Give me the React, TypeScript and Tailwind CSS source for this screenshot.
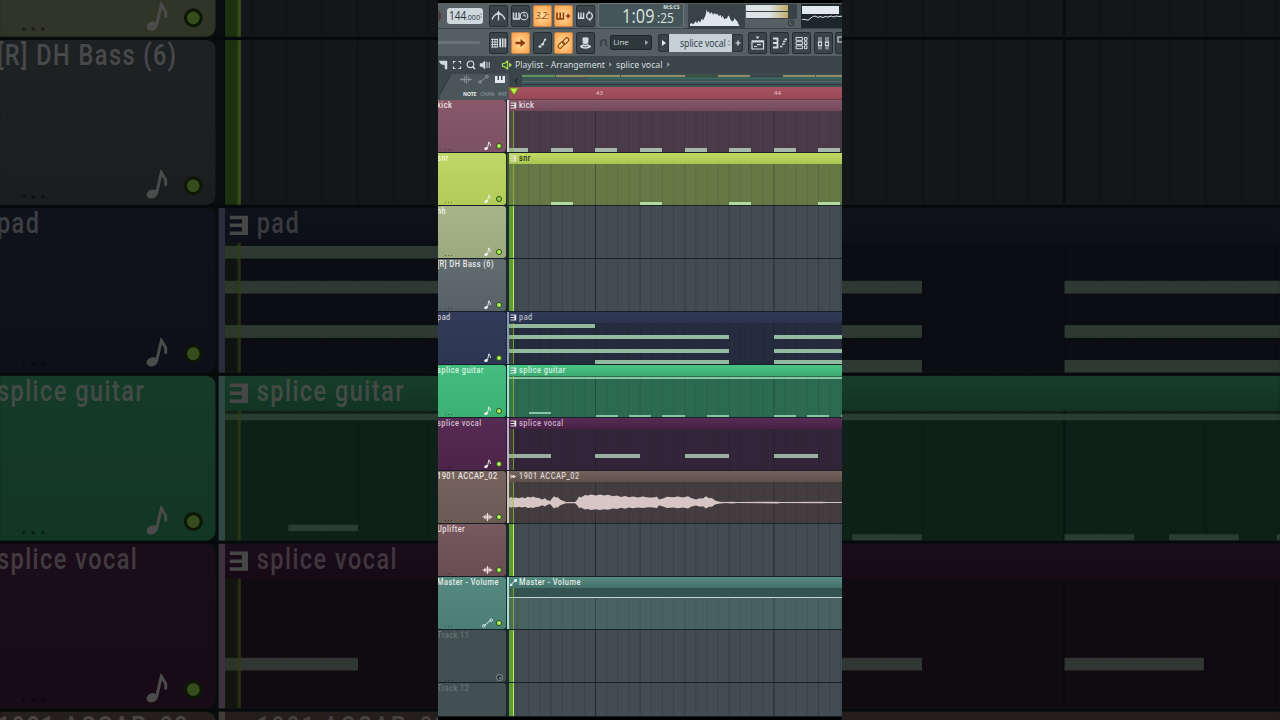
import React from 'react';

type Note = [x: number, y: number, w: number, h: number];

interface Track {
    name: string;
    head: string;
    label: string;
    icon?: 'note' | 'wave' | 'auto';
    stripe?: string;
    clipHead?: string;
    clipBody?: string;
    clipLabel?: string;
    noteColor?: string;
    notes?: Note[];
    kind?: 'pattern' | 'audio' | 'auto';
    height?: string;
}

const tracks: Track[] = [
    {
        name: 'kick', head: 'bg-linear-to-b from-[#88596b] to-[#7b5163]', label: 'text-[#f2e9ed]', icon: 'note',
        stripe: 'bg-[#e6d7de]', clipHead: 'bg-linear-to-b from-[#855a6c] to-[#73485b]', clipBody: 'bg-[#4b3a47]', clipLabel: 'text-[#eadfe4]',
        noteColor: 'bg-[#a5b8a9]', kind: 'pattern',
        notes: [[0, 48, 19, 4], [42, 48, 22, 4], [86, 48, 22, 4], [131, 48, 22, 4], [176, 48, 22, 4], [220, 48, 22, 4], [265, 48, 22, 4], [309, 48, 22, 4]],
    },
    {
        name: 'snr', head: 'bg-linear-to-b from-[#bfd768] to-[#b0cc58]', label: 'text-[#f3f9dc]', icon: 'note',
        stripe: 'bg-[#39502a]', clipHead: 'bg-linear-to-b from-[#c1da66] to-[#a9c64f]', clipBody: 'bg-[#667845]', clipLabel: 'text-[#273018]',
        noteColor: 'bg-[#b0dba0]', kind: 'pattern',
        notes: [[42, 49, 22, 3], [131, 49, 22, 3], [220, 49, 22, 3], [309, 49, 22, 3]],
    },
    { name: 'hh', head: 'bg-linear-to-b from-[#a7b389] to-[#9ca97e]', label: 'text-[#f4f6ee]', icon: 'note' },
    { name: '[R] DH Bass (6)', head: 'bg-linear-to-b from-[#626c70] to-[#566266]', label: 'text-[#e8ebed]', icon: 'note' },
    {
        name: 'pad', head: 'bg-linear-to-b from-[#323b59] to-[#2c3551]', label: 'text-[#c4c9d6]', icon: 'note',
        stripe: 'bg-[#8996c0]', clipHead: 'bg-linear-to-b from-[#323c5a] to-[#2a334e]', clipBody: 'bg-[#242c3d]', clipLabel: 'text-[#b6bccb]',
        noteColor: 'bg-[#93b9a1]', kind: 'pattern',
        notes: [[0, 11.5, 86, 4], [0, 22.5, 220, 4], [264.5, 22.5, 69, 4], [0, 37, 220, 4], [264.5, 37, 69, 4], [86, 48, 134, 4], [264.5, 48, 69, 4]],
    },
    {
        name: 'splice guitar', head: 'bg-linear-to-b from-[#45bd80] to-[#3cb073]', label: 'text-[#d7f3e3]', icon: 'note',
        stripe: 'bg-[#9de6d5]', clipHead: 'bg-linear-to-b from-[#4cc487] to-[#3caa71]', clipBody: 'bg-[#2d6b50]', clipLabel: 'text-[#d7f3e3]',
        noteColor: 'bg-[#86c6a0]', kind: 'pattern',
        notes: [[0, 12, 333, 1.5], [19.5, 47, 22.5, 2], [86.5, 50, 22, 2], [120, 50, 22, 2], [153, 50, 22.5, 2], [198, 50, 22, 2], [264.5, 50, 22.5, 2], [298, 50, 22, 2], [331.5, 50, 3, 2]],
    },
    {
        name: 'splice vocal', head: 'bg-linear-to-b from-[#562b54] to-[#4c2449]', label: 'text-[#d3bfd2]', icon: 'note',
        stripe: 'bg-[#c9a3cf]', clipHead: 'bg-linear-to-b from-[#562b54] to-[#482145]', clipBody: 'bg-[#332539]', clipLabel: 'text-[#ccaecc]',
        noteColor: 'bg-[#9ab0a0]', kind: 'pattern',
        notes: [[0, 36, 41.5, 3.5], [86, 36, 45, 3.5], [175.5, 36, 44.5, 3.5], [264.5, 36, 44.5, 3.5]],
    },
    {
        name: '1901 ACCAP_02', head: 'bg-linear-to-b from-[#77645f] to-[#6b5954]', label: 'text-[#e9e2df]', icon: 'wave',
        stripe: 'bg-[#d5c3bb]', clipHead: 'bg-linear-to-b from-[#75635d] to-[#5f504b]', clipBody: 'bg-[#433d40]', clipLabel: 'text-[#dbd2cf]', kind: 'audio',
    },
    { name: 'Uplifter', head: 'bg-linear-to-b from-[#77595f] to-[#694d53]', label: 'text-[#e8dcdf]', icon: 'wave' },
    {
        name: 'Master - Volume', head: 'bg-linear-to-b from-[#568a80] to-[#4b7f74]', label: 'text-[#e2efec]', icon: 'auto',
        stripe: 'bg-[#a4ded1]', clipHead: 'bg-linear-to-b from-[#568a80] to-[#457268]', clipBody: 'bg-[#47625f]', clipLabel: 'text-[#e2efec]', kind: 'auto',
    },
    { name: 'Track 11', head: 'bg-[#435053]', label: 'text-[#677376]' },
    { name: 'Track 12', head: 'bg-[#435053]', label: 'text-[#677376]', height: 'h-[34px]' },
];

// top half of the vocal sample: [x, amplitude]
const wave = [
    [0, 4.5], [2, 5.5], [4, 4.5], [7, 5.2], [10, 4.4], [13, 5.4], [16, 4.4], [19, 5.8], [22, 5.2], [24, 6], [27, 4.8], [30, 4.5], [33, 3], [36, 4.3], [38, 2.5], [41, 1.6], [43, 4], [45, 6.4],
    [47, 5], [49, 5.4], [51, 3], [54, 1.8], [57, 0.7], [66, 0.7], [68, 2.5], [70, 6], [72, 5.2], [76, 7.5], [79, 7], [82, 8], [87, 7.2], [91, 8], [95, 7.2], [99, 7.8],
    [104, 6.4], [108, 7], [112, 5.6], [116, 6.6], [120, 5.4], [124, 6.2], [129, 5.2], [134, 6], [139, 5], [144, 5.2], [148, 5.8], [150, 3], [154, 4.2], [158, 5.8], [164, 5.4],
    [169, 6.2], [174, 5.2], [179, 6.4], [182, 4.6], [187, 3.2], [191, 4.4], [194, 4], [197, 6.4], [200, 4.4], [203, 4.6], [206, 2], [211, 0.9], [217, 0.5], [223, 0.9], [228, 0.5], [268, 0.9], [272, 0.5], [313, 0.8], [317, 0.5], [333, 0.5],
];
const wavePoints = [...wave.map(([x, a]) => `${x},${20.6 - a}`), ...[...wave].reverse().map(([x, a]) => `${x},${20.6 + a * 0.92}`)].join(' ');

const Grid: React.FC<{ faint?: boolean }> = ({ faint }) => (
    <svg className={`absolute inset-0 h-full w-full ${faint ? 'opacity-55' : ''}`} preserveAspectRatio="none" viewBox="0 0 333 52">
        {Array.from({ length: 30 }, (_, i) => {
            const n = i + 1;
            const x = -3.2 + n * 11.15;
            const bar = n === 8 || n === 24;
            const beat = n % 4 === 0;
            return <rect key={n} x={x} y="0" width="1" height="52" fill="#10181e" opacity={bar ? 0.65 : beat ? 0.28 : 0.15} />;
        })}
    </svg>
);

const Label: React.FC<{ className: string; children: React.ReactNode }> = ({ className, children }) => (
    <span className={`inline-block origin-left scale-x-[.78] whitespace-nowrap font-['Roboto'] text-[9.5px] leading-[10px] font-medium tracking-[0.6px] ${className}`}>{children}</span>
);

const TrackIcon: React.FC<{ icon: Track['icon'] }> = ({ icon }) => {
    if (icon === 'note') {
        return (
            <svg className="h-[10px] w-[11px]" viewBox="0 0 11 10">
                <ellipse cx="4" cy="7.6" rx="1.8" ry="1.4" fill="#f2f2f2" transform="rotate(-20 4 7.6)" />
                <path d="M5.4 7.4 6.900.8 8.300 3.200 8.300 5" fill="none" stroke="#f2f2f2" strokeWidth=".9" />
            </svg>
        );
    }
    if (icon === 'wave') {
        return (
            <svg className="h-[10px] w-[11px]" viewBox="0 0 11 10">
                <path d="M.5 5h10M2.5 3.5v3M4 2.5v5M5.5 1v8M7 2.5v5M8.5 3.7v2.6" stroke="#f2dfe0" strokeWidth="1" />
            </svg>
        );
    }
    return (
        <svg className="h-[10px] w-[11px]" viewBox="0 0 11 10">
            <path d="M2.5 7.6 4.5 6 6.5 3.8 8.5 2.4" stroke="#e8f3f0" fill="none" />
            <circle cx="1.8" cy="7.8" r="1.3" fill="none" stroke="#e8f3f0" strokeWidth=".9" />
            <circle cx="9.2" cy="2.2" r="1.3" fill="none" stroke="#e8f3f0" strokeWidth=".9" />
        </svg>
    );
};

const Led: React.FC<{ track: Track }> = ({ track }) => {
    if (!track.icon) {
        return <span className="flex size-[7px] items-center justify-center rounded-full border border-[#8a9698] bg-[#2a3337]"><span className="size-[2px] rounded-full bg-[#8a9698]" /></span>;
    }
    return <span className={`size-[6px] rounded-full border border-[#274c12] ${track.name === 'snr' ? 'bg-[#9dd048]' : 'bg-[#b0f55e]'}`} />;
};

const ClipIcon: React.FC<{ kind: Track['kind'] }> = ({ kind }) => (
    <svg className="h-[7px] w-[7px] shrink-0" viewBox="0 0 7 7">
        {kind === 'pattern' && <path d="M.5 1h5.2v5H.5M.5 3.5h4M4.900 1v5" fill="none" stroke="#e4e4e4" strokeWidth="1.1" />}
        {kind === 'audio' && <path d="M1 1.5v4M1 3.5h5M3 2v3L5 3.5z" fill="#e4dcd9" stroke="#e4dcd9" strokeWidth=".9" />}
        {kind === 'auto' && <path d="M0 5.2h2v1.5H0zM4.6.3h2.2V2.4H4.6zM1.5 5 5.5 1.5" fill="#e4f1ee" stroke="#e4f1ee" strokeWidth=".9" />}
    </svg>
);

const Clip: React.FC<{ track: Track }> = ({ track }) => (
    <div className="flex h-full flex-col">
        <div className={`relative z-20 flex h-[11px] shrink-0 items-center gap-[2px] pb-px pl-[1px] ${track.clipHead}`}>
            <ClipIcon kind={track.kind} />
            <Label className={track.clipLabel ?? ''}>{track.name}</Label>
        </div>
        <div className={`relative flex-1 ${track.clipBody}`}>
            <Grid faint />
            {track.kind === 'audio' && (
                <svg className="absolute top-0 left-0 h-[41px] w-[333px]" viewBox="0 0 333 41">
                    <polygon points={wavePoints} fill="#d8c6c6" />
                </svg>
            )}
            {track.kind === 'auto' && <div className="absolute inset-x-0 top-0 h-[10px] border-b border-[#bfd8d3] bg-[#345350]" />}
        </div>
        {track.notes?.map(([x, y, w, h], i) => (
            <span key={i} className={`absolute ${track.noteColor}`} style={{ left: x, top: y, width: w, height: h }} />
        ))}
    </div>
);

const TrackRow: React.FC<{ track: Track }> = ({ track }) => (
    <div className={`flex shrink-0 ${track.height ?? 'h-[53px]'}`}>
        <div className="flex w-[71px] shrink-0 justify-between border-b border-[#162024] bg-[#1b2a2d]">
            <div className={`flex w-[67.5px] flex-col justify-between overflow-hidden rounded-r-[3px] ${track.head}`}>
                <Label className={`-ml-px ${track.label}`}>{track.name}</Label>
                {!track.height && (
                    <div className="flex items-center pb-[1px] pl-[7px]">
                        <span className="flex w-[37px] gap-[2px] pt-[6px]">
                            <i className="size-px bg-black/40" /><i className="size-px bg-black/40" /><i className="size-px bg-black/40" />
                        </span>
                        <span className="w-[14px]">{track.icon && <TrackIcon icon={track.icon} />}</span>
                        <Led track={track} />
                    </div>
                )}
            </div>
            {track.stripe && <div className={`w-[2px] ${track.stripe}`} />}
        </div>
        <div className="relative flex-1 overflow-hidden border-b border-[#182127] bg-[#434b53]">
            {track.kind ? <Clip track={track} /> : <Grid />}
            <div className={`absolute inset-y-0 left-0 z-10 w-[5px] border-r ${track.kind ? 'border-[#a2c93f]/60 bg-[#6fa02a]/20' : 'border-[#b4ee5c] bg-[#5f9a35]'}`} />
        </div>
    </div>
);

const ToolButton: React.FC<{ active?: boolean; children: React.ReactNode }> = ({ active, children }) => (
    <div className={`flex h-[22px] w-[19px] shrink-0 items-center justify-center overflow-hidden rounded-[2px] border ${active ? 'border-[#c98443] bg-radial from-[#ffdf9c] to-[#f99c45] text-[#8d3b0c]' : 'border-[#252d31] bg-[#3a4347] text-[#d3dbde]'}`}>
        {children}
    </div>
);

const Glyph: React.FC<{ d: string; children?: React.ReactNode; w?: number }> = ({ d, children, w = 1.2 }) => (
    <svg className="h-[16px] w-[17px] shrink-0" viewBox="0 0 17 16" fill="none" stroke="currentColor" strokeWidth={w}>
        <path d={d} />
        {children}
    </svg>
);

const TopBar: React.FC = () => (
    <div className="flex h-[26px] shrink-0 items-center border-b border-[#394246] bg-[#566064]">
        <div className="-ml-[10px] size-[14px] shrink-0 rounded-full border border-[#8a434a] bg-[#3c4448]" />
        <div className="ml-[5px] flex h-[16px] w-[36px] shrink-0 items-center rounded-[3px] bg-[#cfd8dd] pl-[2px] font-['Open_Sans'] text-[#27333a]">
            <span className="flex w-[17px]"><span className="inline-block origin-left scale-x-[.84] text-[12px] leading-[14px]">144</span></span>
            <span className="flex w-[13px] pt-[2px]"><span className="inline-block origin-left scale-x-[.88] text-[8px] leading-[9px]">.000</span></span>
            <svg className="h-[7px] w-[4px]" viewBox="0 0 4 8" fill="#9ba7ae"><path d="M0 3 2 .8 4 3zM0 5l2 2.2L4 5z" /></svg>
        </div>
        <div className="ml-[6px] flex gap-[2.8px]">
            <ToolButton><Glyph d="M2 11.500Q4 6.500 8 5.500M15 11.500Q13 6.500 9 5.500M8.500 5v7.500" w={1.3}><path d="M6 6.500 8.500 2.500 11 6.500z" fill="currentColor" stroke="none" /></Glyph></ToolButton>
            <ToolButton><Glyph d="M1.5 4.5v7M4.2 4.5v7M7 4.5v7M1 11h7" w={1.5}><circle cx="12" cy="8" r="3.8" strokeWidth="1.1" /><path d="M12 5.5V8h2" strokeWidth="1" /></Glyph></ToolButton>
            <ToolButton active><span className="font-['Open_Sans'] text-[9px] leading-none tracking-[-0.3px] italic">3.2:</span></ToolButton>
            <ToolButton active><Glyph d="M2 4.5v7M5.2 4.5v7M8.4 4.5v7M1.2 11h8M10.8 8h4.6M13.1 5.7v4.6" w={1.6} /></ToolButton>
            <ToolButton><Glyph d="M1.5 4.5v6M4 4.5v6M6.6 4.5v6M1 10.3h6.3" w={1.4}><path d="M11.500 4.500Q8 8 11 11M13.500 11.500q3.500-3.500.5-6.500" strokeWidth="1.3" /><path d="m11.5 2.500 2.5 2-2.5 2zM13.5 9.500 11 11.500l2.5 2z" fill="currentColor" stroke="none" /></Glyph></ToolButton>
        </div>
        <div className="ml-[3px] flex h-[25px] w-[86px] shrink-0 rounded-[2px] border border-[#6b777a] bg-[#45555a] font-['Open_Sans'] text-[#d9e3df]">
            <span className="flex w-[58px] shrink-0 pl-[23px]"><span className="inline-block origin-left scale-x-[.79] text-[20.5px] leading-[23px] tracking-[0.2px]">1:09</span></span>
            <span className="flex w-[26px] shrink-0 flex-col">
                <span className="pl-[6px] text-[5px] leading-[7px] font-bold whitespace-nowrap">M:S:CS</span>
                <span className="flex"><span className="inline-block origin-left scale-x-[.86] text-[14px] leading-[14px]">:25</span></span>
            </span>
        </div>
        <div className="ml-[4px] flex h-[24px] w-[57px] shrink-0 items-end bg-[#394246]">
            <svg className="h-[24px] w-[57px]" viewBox="0 0 57 24" fill="#dfe7ea">
                <path d="M2 22V20l2-1 1 1.500 3-3.500 1 2.500 1.500-3 1.500 2 2-4 1 2 2-4 .7-2 1-5 1 3 1-1 1.500 2.500 1.500-2 1.500 3 1-2 2 1.500 1-1 1.500 2.500 2-1 1 3 1-2.500 1.500 4 1.500-1.500 1 1 1.500-3.500 1 1 1.500 3.500 1.500 1.500 1-.5 1.500-3 1 2 1.500 1 1 2.500 1.500 3V22z" />
            </svg>
        </div>
        <div className="ml-[1px] flex h-[23px] w-[51px] shrink-0 flex-col">
            <div className="flex h-[15px] shrink-0 flex-col gap-px bg-[#394246] pt-px">
                <div className="h-[6px] w-[42px] shrink-0 bg-linear-to-r from-[#dce3e5] from-55% to-[#c2ab62]" />
                <div className="h-[6px] w-[42px] shrink-0 bg-linear-to-r from-[#dce3e5] from-55% to-[#c2ab62]" />
            </div>
            <svg className="mr-[2px] ml-auto size-[8px]" viewBox="0 0 8 8" fill="none" stroke="#2d3539"><circle cx="4" cy="4" r="3" /><path d="M4 2v2h2" /></svg>
        </div>
        <div className="ml-[4px] h-[24px] w-[42px] shrink-0 bg-[#1d262b] pt-[2px] pl-px">
            <div className="h-[8px] w-[37px] bg-[#e2e9ec]" />
            <svg className="h-[12px] w-[41px]" viewBox="0 0 41 12" fill="none" stroke="#dbe4e7"><path d="M0 5.500h3q3 2 6-1.500t7-.5l2-1 3 1 2-1 3 .5 3-1 3 1 2-1 3 .5 3-.3" /></svg>
        </div>
    </div>
);

const ToolBar: React.FC = () => (
    <div className="flex h-[27px] shrink-0 items-center bg-[#566064]">
        <div className="h-[3px] w-[42px] shrink-0 rounded bg-[#6a7579]" />
        <div className="ml-[9px] flex shrink-0 gap-[2.8px]">
            <ToolButton><Glyph d="M1 4.5h7M1 7h7M1 9.5h7M1 12h7M2.500 3.5v9M5 3.5v9M7.300 3.5v9" w={0.9}><path d="M9.2 3.5h7v8.8h-7z" fill="currentColor" stroke="none" /><path d="M11.5 3.5v5.5M14 3.5v5.5M11.5 9v3M14 9v3" stroke="#3a4347" /></Glyph></ToolButton>
            <ToolButton active><Glyph d="M3.5 8h6" w={2.6}><path d="m8.5 4 5 4-5 4z" fill="currentColor" stroke="none" /></Glyph></ToolButton>
            <ToolButton><Glyph d="M8.800 9.500 11 4M11 3.500l1 2" w={1.2}><ellipse cx="6" cy="11.5" rx="1.6" ry="1.2" fill="currentColor" stroke="none" /><ellipse cx="8.6" cy="9.300" rx="1.5" ry="1.2" fill="currentColor" stroke="none" /></Glyph></ToolButton>
            <ToolButton active><Glyph d="" w={1.1}><rect x="2.5" y="8" width="7.4" height="4" rx="2" transform="rotate(-45 6.2 10)" /><rect x="7" y="4" width="7.4" height="4" rx="2" transform="rotate(-45 10.7 6)" /></Glyph></ToolButton>
            <ToolButton><Glyph d="M6 3h5l-.5 7.500h-4z" w={0.8}><path d="M6 3h5l-.5 7.500h-4z" fill="currentColor" /><ellipse cx="8.500" cy="11.500" rx="5.500" ry="2.200" fill="currentColor" stroke="none" /><path d="M6.300 9q2.200 1 4.400 0M6 11.300q2.500 1.200 5 0" stroke="#3a4347" /></Glyph></ToolButton>
        </div>
        <svg className="ml-[4px] h-[10px] w-[9px] shrink-0" viewBox="0 0 10 10" fill="none" stroke="#3a4347" strokeWidth="2"><path d="M2 9V4.5a3 3 0 0 1 6 0V9" /></svg>
        <div className="ml-[2px] flex h-[15px] w-[42px] shrink-0 items-center justify-between rounded-[2px] border border-[#20272b] bg-[#2f383c] px-[2px] pb-px font-['Open_Sans'] text-[8px] leading-none text-[#d0d8db]">
            <span>Line</span>
            <svg className="h-[5px] w-[4px]" viewBox="0 0 4 5" fill="#97a3a7"><path d="M0 0 3.5 2.5 0 5z" /></svg>
        </div>
        <div className="ml-[6px] flex h-[18px] shrink-0">
            <div className="flex w-[11px] items-center justify-center rounded-l-[2px] border border-[#2b3337] bg-[#3a4347]">
                <svg className="h-[6px] w-[4px]" viewBox="0 0 4 6" fill="#e4eaec"><path d="M0 0 4 3 0 6z" /></svg>
            </div>
            <div className="flex w-[63px] items-center bg-[#c5d0d7] pl-[11px] font-['Open_Sans'] text-[#27333a]">
                <span className="flex w-[47px]"><span className="inline-block origin-left scale-x-[.8] text-[10.8px] leading-[14px] whitespace-nowrap">splice vocal</span></span>
                <svg className="h-[8px] w-[4px]" viewBox="0 0 4 8" fill="#9ba7ae"><path d="M0 3 2 .8 4 3zM0 5l2 2.2L4 5z" /></svg>
            </div>
            <div className="flex w-[11px] items-center justify-center rounded-r-[2px] border border-[#2b3337] bg-[#3a4347]">
                <svg className="size-[6px]" viewBox="0 0 6 6" stroke="#e4eaec" strokeWidth="1.2"><path d="M3 .5v5M.5 3h5" /></svg>
            </div>
        </div>
        <div className="ml-[5px] flex gap-[2.8px]">
            <ToolButton><Glyph d="M3 6h11.5v8H3z" w={1.2}><path d="M6.5 1.5h4L8.5 4zM3 5.5h11.5v2H3z" fill="currentColor" stroke="none" /><path d="M5 11.5h3M8 9.7h4" /></Glyph></ToolButton>
            <ToolButton><Glyph d="M2 3.5h5M2 8h5M2 12.500h5M6.500 2.700v10.600" w={1.8}><path d="M9 11.500h2.500M11 9h2.500M12 6.500h2.500M13.500 4.300H16" strokeWidth="1.7" /></Glyph></ToolButton>
            <ToolButton><Glyph d="M3 2.5h6.5v2.8H3zM3 6.7h6.5v2.8H3zM3 10.9h6.5v2.8H3z" w={1}><path d="M11.5 2.5H14v2.8h-2.5zM11.5 6.7H14v2.8h-2.5zM11.5 10.9H14v2.8h-2.5z" /></Glyph></ToolButton>
            <ToolButton><Glyph d="M4 2v5M6 2v5M4 11v3.500M6 11v3.500M11 2v5M13 2v5M11 11v3.500M13 11v3.500" w={0.9}><path d="M3.500 7.200h3v3.300h-3zM10.500 7.200h3v3.300h-3z" strokeWidth="1.2" /></Glyph></ToolButton>
            <ToolButton><Glyph d="M2 2h8v5H2z" /></ToolButton>
        </div>
    </div>
);

const TitleBar: React.FC = () => (
    <div className="flex h-[18px] shrink-0 items-center bg-[#3c464a] pb-px font-['Noto_Sans'] text-[9px] leading-[12px] whitespace-nowrap text-[#d7dee0]">
        <svg className="h-[10px] w-[54px] shrink-0" viewBox="0 0 54 10" fill="none" stroke="#d3dadd" strokeWidth="1.2">
            <path d="M1 1h8v8H7V5L3 4z" fill="#d3dadd" strokeWidth=".5" />
            <path d="M15.500 3.500v-2h2M20.500 1.500h2v2M22.500 6.500v2h-2M17.500 8.500h-2v-2" />
            <circle cx="32.500" cy="4.300" r="3.300" /><path d="m35 7 2 2" strokeWidth="1.700" />
            <path d="M42 3.500h2L47 1v8l-3-2.500h-2z" fill="#d3dadd" strokeWidth=".5" /><path d="M49 2v6M51.200 2v6" strokeWidth="1" />
        </svg>
        <svg className="ml-[9px] h-[10px] w-[12px] shrink-0" viewBox="0 0 12 10"><path d="M1.500 3.500h2L6.500 1v8l-3-2.500h-2z" fill="none" stroke="#a4e04e" strokeWidth="1.200" /><path d="M8 2.500 11 5 8 7.500z" fill="#a4e04e" /></svg>
        <span className="ml-[2px] flex w-[94px]"><span className="inline-block origin-left scale-x-[.96]">Playlist - Arrangement</span></span>
        <svg className="h-[5px] w-[3px]" viewBox="0 0 3 5" fill="#8b979b"><path d="M0 0 3 2.500 0 5z" /></svg>
        <span className="ml-[4px] flex w-[51px]"><span className="inline-block origin-left scale-x-[.97]">splice vocal</span></span>
        <svg className="h-[5px] w-[3px]" viewBox="0 0 3 5" fill="#8b979b"><path d="M0 0 3 2.500 0 5z" /></svg>
    </div>
);

const minimap = [
    ['w-[33px]', 'bg-[#5f9358]'], ['w-[32px]', 'bg-[#918f62]'], ['w-[32px]', 'bg-[#918f62]'], ['w-[32px]', 'bg-[#938c62]'], ['w-[32px]', 'bg-[#938c62]'],
    ['w-[32px]', 'bg-[#3c5238]'], ['w-[32px]', 'bg-[#938c62]'], ['w-[32px]', 'bg-[#3a4448]'], ['w-[32px]', 'bg-[#938c62]'], ['w-[40px]', 'bg-[#938c62]'],
];

const Ruler: React.FC = () => (
    <div className="flex h-[27px] shrink-0 bg-[#4a565a]">
        <div className="relative w-[71px] shrink-0">
            <svg className="absolute inset-0 h-[27px] w-[71px]" viewBox="0 0 71 27" fill="none">
                <path d="M0 0h13L2 20v5H0z" fill="#3c464a" />
                <path d="M13 0 2 20" stroke="#2e373b" />
                <path d="M22 5.500h12M24.500 4v3M26.500 2.500v6M28.300 1v9M30.200 3v5M32 4.200v2.600" stroke="#89959a" strokeWidth=".9" />
                <path d="m42 8 7-5.500" stroke="#89959a" /><circle cx="42" cy="8" r="1.300" stroke="#89959a" /><circle cx="49" cy="2.700" r="1.300" stroke="#89959a" />
                <path d="M57 2h10v7H57z" fill="#e5eaec" /><path d="M60.300 2v4M63.700 2v4" stroke="#3c464a" strokeWidth="1.400" />
            </svg>
            <div className="flex gap-[4px] pt-[16.5px] pl-[25px] font-['Noto_Sans'] text-[5px] leading-[6px] font-bold tracking-[-0.1px] text-[#7d898d]">
                <span className="text-[#e7ecee]">NOTE</span><span>CHAN</span><span>PAT</span>
            </div>
        </div>
        <div className="flex flex-1 flex-col overflow-hidden">
            <div className="flex h-[13px] shrink-0">
                <div className="flex w-[13px] shrink-0 items-center justify-center bg-[#3a4448]">
                    <svg className="h-[6px] w-[4px]" viewBox="0 0 4 6" fill="none" stroke="#1f272b" strokeWidth="1.200"><path d="M3.500.5 1 3l2.500 2.500" /></svg>
                </div>
                <div className="flex-1 overflow-hidden bg-[#3f5456] pt-[1px]">
                    <div className="flex gap-[.5px]">
                        {minimap.map(([w, c], i) => <i key={i} className={`h-[2px] shrink-0 ${w} ${c}`} />)}
                    </div>
                    <div className="mt-px ml-[65px] h-px bg-[#2c7561]" />
                    <div className="mt-[2px] h-px bg-[#566a6b]" />
                    <div className="mt-[2px] h-px bg-[#2d3a3d]" />
                </div>
            </div>
            <div className="relative flex h-[13px] shrink-0 items-center border-b border-[#6d3a45] bg-linear-to-b from-[#a85361] to-[#974857] font-['Noto_Sans'] text-[6px] leading-none text-[#f0c4ca]">
                <svg className="absolute top-0 left-0 h-[9px] w-[10px]" viewBox="0 0 10 9"><path d="M.5 1h9L5 8z" fill="#b8ef45" stroke="#557d1c" strokeWidth=".8" /></svg>
                <span className="ml-[87px] w-[178px]">43</span>
                <span>44</span>
            </div>
        </div>
    </div>
);

const Studio: React.FC = () => (
    <div className="flex h-[720px] w-[404px] flex-col overflow-hidden border-t-3 border-black bg-black">
        <TopBar />
        <ToolBar />
        <TitleBar />
        <Ruler />
        <div className="-mt-[1px] flex h-[617px] shrink-0 flex-col overflow-hidden">
            {tracks.map((t) => <TrackRow key={t.name} track={t} />)}
        </div>
    </div>
);

export default function App() {
    return (
        <div className="relative flex h-[720px] w-[1280px] justify-center overflow-hidden bg-black">
            {/* dimmed, enlarged copy fills the sides */}
            <div className="absolute top-0 left-[438px] scale-[3.168] opacity-[.31]" aria-hidden="true">
                <Studio />
            </div>
            <div className="relative">
                <Studio />
            </div>
        </div>
    );
}
